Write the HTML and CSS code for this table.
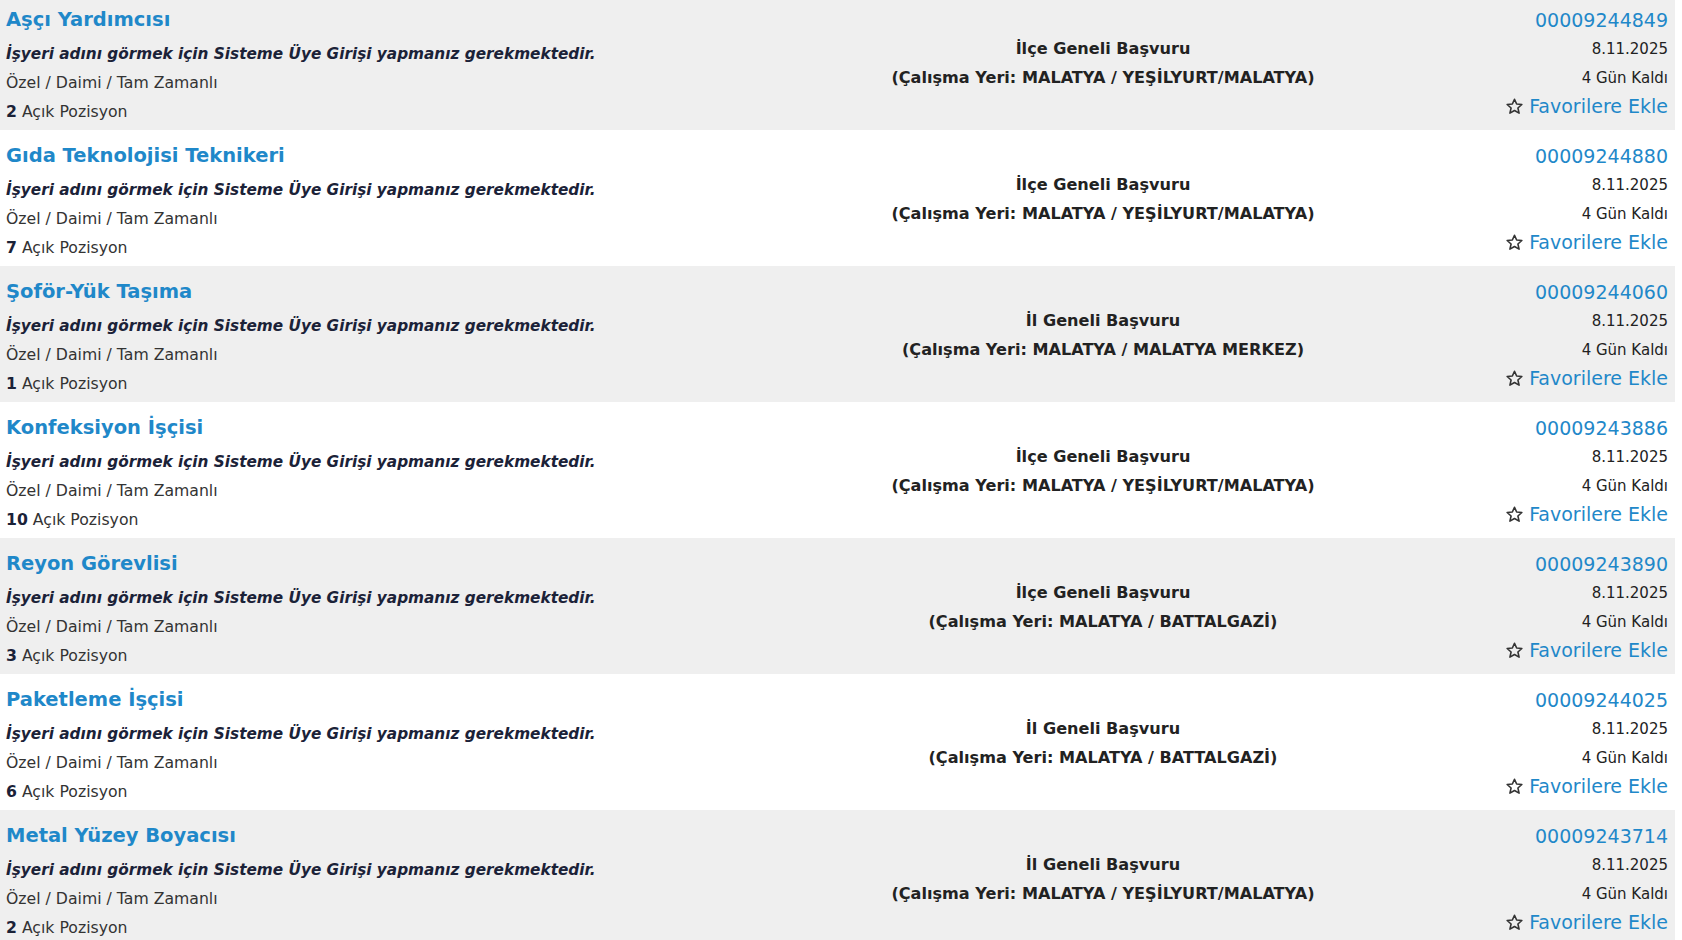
FILE: index.html
```html
<!DOCTYPE html>
<html lang="tr">
<head>
<meta charset="utf-8">
<title>İş İlanları</title>
<link rel="stylesheet" href="styles.css">
</head>
<body>
<div class="list">

  <div class="row alt">
    <div class="col-left">
      <a class="title">Aşçı Yardımcısı</a>
      <div class="notice">İşyeri adını görmek için Sisteme Üye Girişi yapmanız gerekmektedir.</div>
      <div class="meta">Özel / Daimi / Tam Zamanlı</div>
      <div class="meta"><b>2</b> Açık Pozisyon</div>
    </div>
    <div class="col-mid">
      <div>İlçe Geneli Başvuru</div>
      <div>(Çalışma Yeri: MALATYA / YEŞİLYURT/MALATYA)</div>
    </div>
    <div class="col-right">
      <a class="id">00009244849</a>
      <div class="date">8.11.2025</div>
      <div class="left">4 Gün Kaldı</div>
      <a class="fav"><svg class="star" viewBox="0 0 24 24"><path d="M12 2.8l2.7 6.1 6.6.6-5 4.4 1.5 6.5L12 17l-5.8 3.4 1.5-6.5-5-4.4 6.6-.6z"/></svg>Favorilere Ekle</a>
    </div>
  </div>

  <div class="row">
    <div class="col-left">
      <a class="title">Gıda Teknolojisi Teknikeri</a>
      <div class="notice">İşyeri adını görmek için Sisteme Üye Girişi yapmanız gerekmektedir.</div>
      <div class="meta">Özel / Daimi / Tam Zamanlı</div>
      <div class="meta"><b>7</b> Açık Pozisyon</div>
    </div>
    <div class="col-mid">
      <div>İlçe Geneli Başvuru</div>
      <div>(Çalışma Yeri: MALATYA / YEŞİLYURT/MALATYA)</div>
    </div>
    <div class="col-right">
      <a class="id">00009244880</a>
      <div class="date">8.11.2025</div>
      <div class="left">4 Gün Kaldı</div>
      <a class="fav"><svg class="star" viewBox="0 0 24 24"><path d="M12 2.8l2.7 6.1 6.6.6-5 4.4 1.5 6.5L12 17l-5.8 3.4 1.5-6.5-5-4.4 6.6-.6z"/></svg>Favorilere Ekle</a>
    </div>
  </div>

  <div class="row alt">
    <div class="col-left">
      <a class="title">Şoför-Yük Taşıma</a>
      <div class="notice">İşyeri adını görmek için Sisteme Üye Girişi yapmanız gerekmektedir.</div>
      <div class="meta">Özel / Daimi / Tam Zamanlı</div>
      <div class="meta"><b>1</b> Açık Pozisyon</div>
    </div>
    <div class="col-mid">
      <div>İl Geneli Başvuru</div>
      <div>(Çalışma Yeri: MALATYA / MALATYA MERKEZ)</div>
    </div>
    <div class="col-right">
      <a class="id">00009244060</a>
      <div class="date">8.11.2025</div>
      <div class="left">4 Gün Kaldı</div>
      <a class="fav"><svg class="star" viewBox="0 0 24 24"><path d="M12 2.8l2.7 6.1 6.6.6-5 4.4 1.5 6.5L12 17l-5.8 3.4 1.5-6.5-5-4.4 6.6-.6z"/></svg>Favorilere Ekle</a>
    </div>
  </div>

  <div class="row">
    <div class="col-left">
      <a class="title">Konfeksiyon İşçisi</a>
      <div class="notice">İşyeri adını görmek için Sisteme Üye Girişi yapmanız gerekmektedir.</div>
      <div class="meta">Özel / Daimi / Tam Zamanlı</div>
      <div class="meta"><b>10</b> Açık Pozisyon</div>
    </div>
    <div class="col-mid">
      <div>İlçe Geneli Başvuru</div>
      <div>(Çalışma Yeri: MALATYA / YEŞİLYURT/MALATYA)</div>
    </div>
    <div class="col-right">
      <a class="id">00009243886</a>
      <div class="date">8.11.2025</div>
      <div class="left">4 Gün Kaldı</div>
      <a class="fav"><svg class="star" viewBox="0 0 24 24"><path d="M12 2.8l2.7 6.1 6.6.6-5 4.4 1.5 6.5L12 17l-5.8 3.4 1.5-6.5-5-4.4 6.6-.6z"/></svg>Favorilere Ekle</a>
    </div>
  </div>

  <div class="row alt">
    <div class="col-left">
      <a class="title">Reyon Görevlisi</a>
      <div class="notice">İşyeri adını görmek için Sisteme Üye Girişi yapmanız gerekmektedir.</div>
      <div class="meta">Özel / Daimi / Tam Zamanlı</div>
      <div class="meta"><b>3</b> Açık Pozisyon</div>
    </div>
    <div class="col-mid">
      <div>İlçe Geneli Başvuru</div>
      <div>(Çalışma Yeri: MALATYA / BATTALGAZİ)</div>
    </div>
    <div class="col-right">
      <a class="id">00009243890</a>
      <div class="date">8.11.2025</div>
      <div class="left">4 Gün Kaldı</div>
      <a class="fav"><svg class="star" viewBox="0 0 24 24"><path d="M12 2.8l2.7 6.1 6.6.6-5 4.4 1.5 6.5L12 17l-5.8 3.4 1.5-6.5-5-4.4 6.6-.6z"/></svg>Favorilere Ekle</a>
    </div>
  </div>

  <div class="row">
    <div class="col-left">
      <a class="title">Paketleme İşçisi</a>
      <div class="notice">İşyeri adını görmek için Sisteme Üye Girişi yapmanız gerekmektedir.</div>
      <div class="meta">Özel / Daimi / Tam Zamanlı</div>
      <div class="meta"><b>6</b> Açık Pozisyon</div>
    </div>
    <div class="col-mid">
      <div>İl Geneli Başvuru</div>
      <div>(Çalışma Yeri: MALATYA / BATTALGAZİ)</div>
    </div>
    <div class="col-right">
      <a class="id">00009244025</a>
      <div class="date">8.11.2025</div>
      <div class="left">4 Gün Kaldı</div>
      <a class="fav"><svg class="star" viewBox="0 0 24 24"><path d="M12 2.8l2.7 6.1 6.6.6-5 4.4 1.5 6.5L12 17l-5.8 3.4 1.5-6.5-5-4.4 6.6-.6z"/></svg>Favorilere Ekle</a>
    </div>
  </div>

  <div class="row alt">
    <div class="col-left">
      <a class="title">Metal Yüzey Boyacısı</a>
      <div class="notice">İşyeri adını görmek için Sisteme Üye Girişi yapmanız gerekmektedir.</div>
      <div class="meta">Özel / Daimi / Tam Zamanlı</div>
      <div class="meta"><b>2</b> Açık Pozisyon</div>
    </div>
    <div class="col-mid">
      <div>İl Geneli Başvuru</div>
      <div>(Çalışma Yeri: MALATYA / YEŞİLYURT/MALATYA)</div>
    </div>
    <div class="col-right">
      <a class="id">00009243714</a>
      <div class="date">8.11.2025</div>
      <div class="left">4 Gün Kaldı</div>
      <a class="fav"><svg class="star" viewBox="0 0 24 24"><path d="M12 2.8l2.7 6.1 6.6.6-5 4.4 1.5 6.5L12 17l-5.8 3.4 1.5-6.5-5-4.4 6.6-.6z"/></svg>Favorilere Ekle</a>
    </div>
  </div>

</div>
</body>
</html>
```

FILE: styles.css
```css
html, body {
  margin: 0;
  padding: 0;
  background: #ffffff;
  overflow: hidden;
}

body {
  font-family: "DejaVu Sans", Verdana, sans-serif;
  color: #222222;
}

.list {
  width: 1675px;
  margin-top: -6px;
}

.row {
  display: grid;
  grid-template-columns: 726px 1fr 195px;
  height: 136px;
  box-sizing: border-box;
  background: #ffffff;
}

.row.alt {
  background: #efefef;
}

.col-left {
  display: flex;
  flex-direction: column;
  padding: 6px 0 0 6px;
}

.title {
  font-size: 19.5px;
  font-weight: bold;
  color: #1f88c9;
  line-height: 40px;
  white-space: nowrap;
}

.notice {
  font-size: 15.3px;
  font-weight: bold;
  font-style: italic;
  color: #1b2238;
  line-height: 28px;
  white-space: nowrap;
}

.meta {
  font-size: 15.7px;
  color: #333333;
  line-height: 29px;
  white-space: nowrap;
}

.meta b {
  color: #1b2238;
}

.col-mid {
  display: flex;
  flex-direction: column;
  justify-content: center;
  align-items: center;
  padding-top: 2px;
  font-size: 16.1px;
  font-weight: bold;
  color: #222222;
  line-height: 29px;
  white-space: nowrap;
}

.col-right {
  display: flex;
  flex-direction: column;
  align-items: flex-end;
  padding: 11px 7px 0 0;
  line-height: 29px;
  white-space: nowrap;
}

.id {
  font-size: 19px;
  color: #1f88c9;
  line-height: 30px;
}

.date,
.left {
  font-size: 15px;
  color: #222222;
}

.fav {
  display: flex;
  align-items: center;
  gap: 5px;
  font-size: 19px;
  color: #1f88c9;
  line-height: 27px;
}

.star {
  width: 19px;
  height: 19px;
  fill: none;
  stroke: #333333;
  stroke-width: 2;
  stroke-linejoin: round;
}
```
